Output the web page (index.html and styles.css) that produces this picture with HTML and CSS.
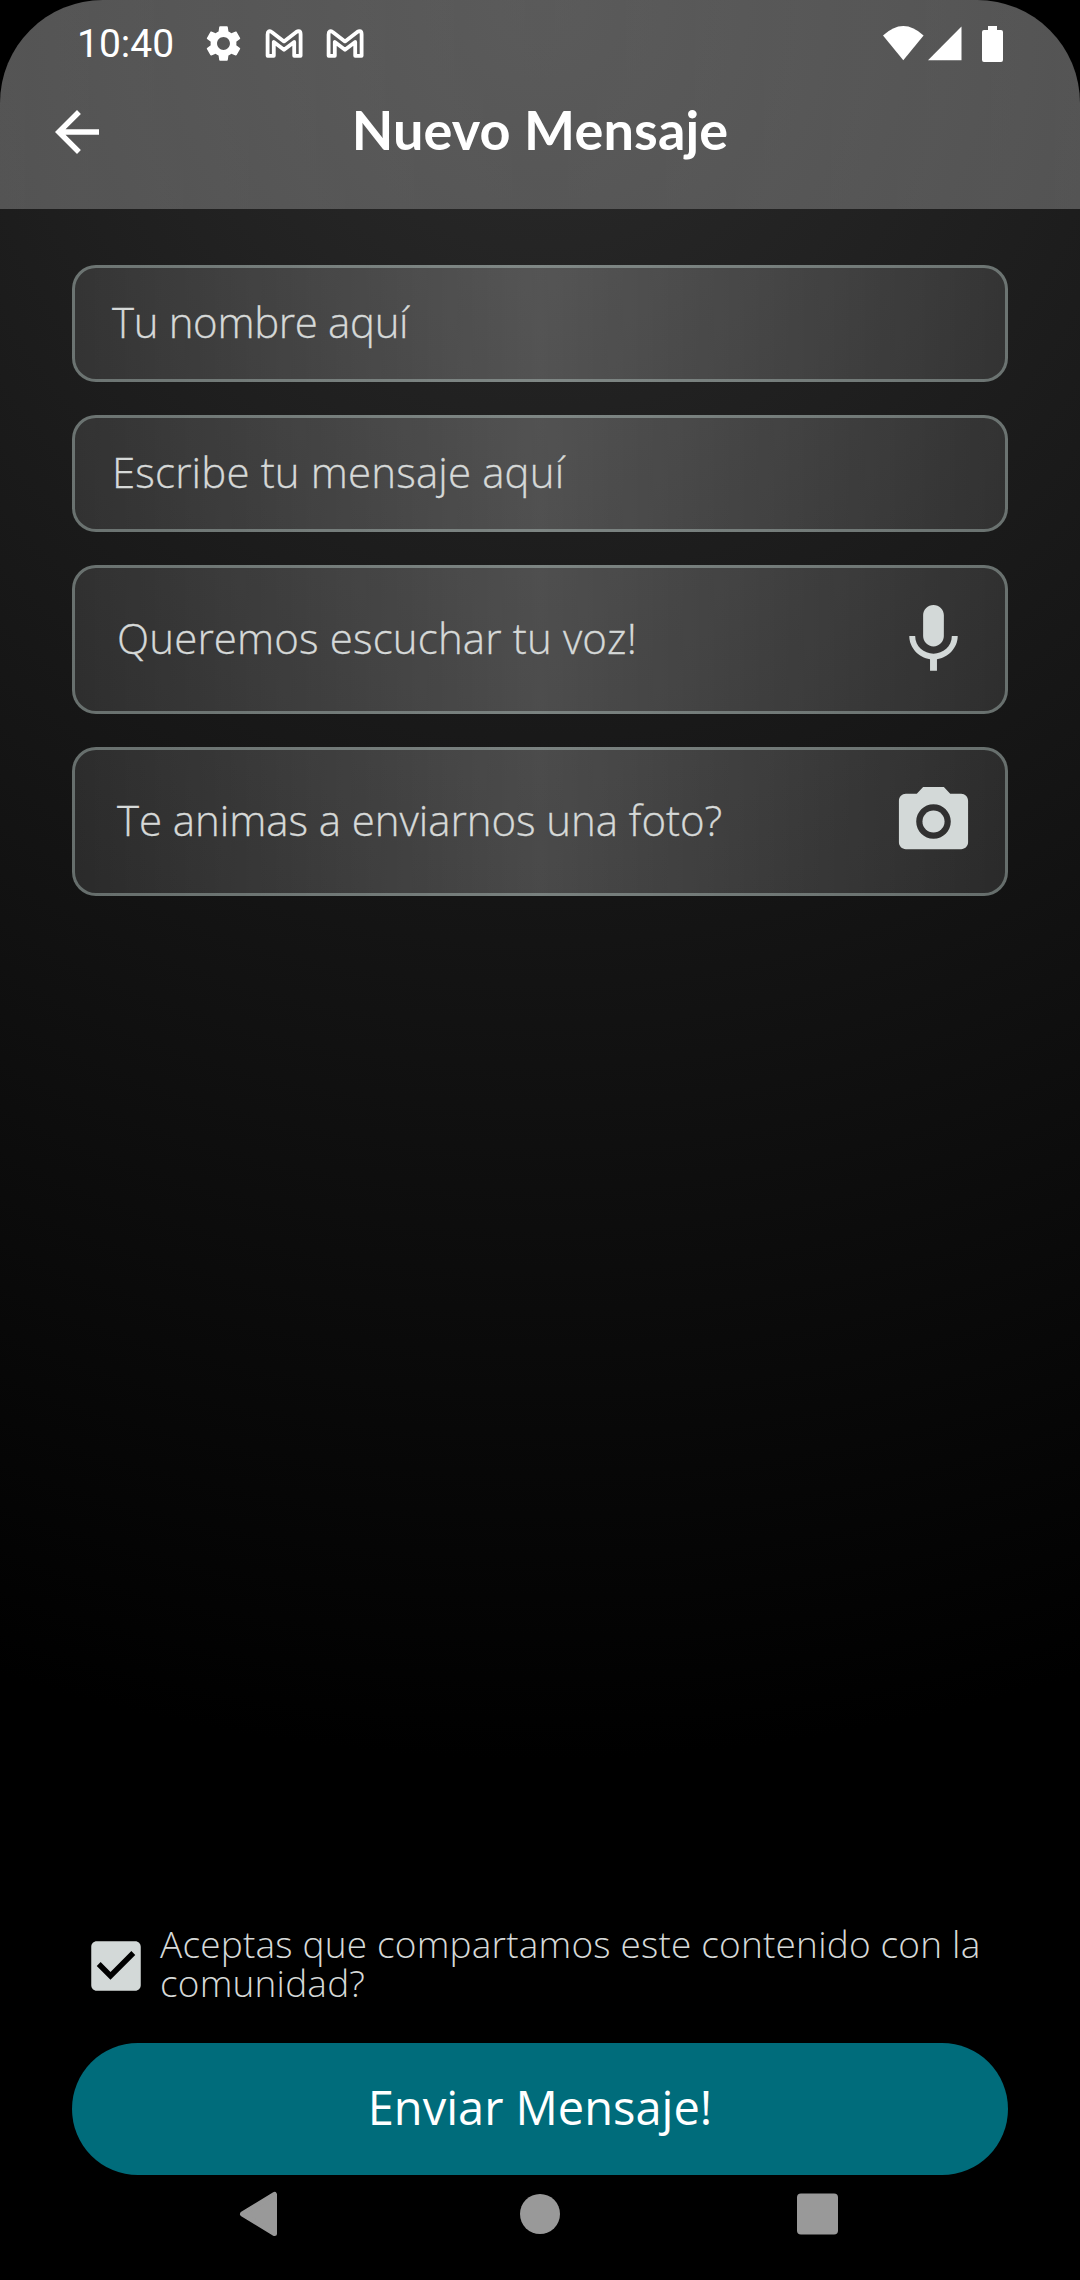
FILE: index.html
```html
<!DOCTYPE html>
<html lang="es">
<head>
<meta charset="utf-8">
<title>Nuevo Mensaje</title>
<link rel="stylesheet" href="styles.css">
</head>
<body>
<div class="screen">
  <header class="header">
    <div class="status">
      <span class="time">10:40</span>
      <svg class="gear" viewBox="0 0 24 24"><path d="M19.14 12.94c.04-.3.06-.61.06-.94 0-.32-.02-.64-.07-.94l2.03-1.58c.18-.14.23-.41.12-.61l-1.92-3.32c-.12-.22-.37-.29-.59-.22l-2.39.96c-.5-.38-1.03-.7-1.62-.94l-.36-2.54c-.04-.24-.24-.41-.48-.41h-3.84c-.24 0-.43.17-.47.41l-.36 2.54c-.59.24-1.13.57-1.62.94l-2.39-.96c-.22-.08-.47 0-.59.22L2.74 8.87c-.12.21-.08.47.12.61l2.03 1.58c-.05.3-.09.63-.09.94s.02.64.07.94l-2.03 1.58c-.18.14-.23.41-.12.61l1.92 3.32c.12.22.37.29.59.22l2.39-.96c.5.38 1.03.7 1.62.94l.36 2.54c.05.24.24.41.48.41h3.84c.24 0 .44-.17.47-.41l.36-2.54c.59-.24 1.13-.56 1.62-.94l2.39.96c.22.08.47 0 .59-.22l1.92-3.32c.12-.22.07-.47-.12-.61l-2.01-1.58zM12 15.6c-1.98 0-3.6-1.62-3.6-3.6s1.62-3.6 3.6-3.6 3.6 1.62 3.6 3.6-1.62 3.6-3.6 3.6z"/></svg>
      <svg class="mail" viewBox="0 0 40 32"><path d="M3.6 27.8V6.6Q3.6 1.2 8 4.2L20 13.4 32 4.2Q36.6 1.2 36.6 6.6V27.8H30.2V14L20 21.8 9.8 14V27.8Z"/></svg>
      <svg class="mail" viewBox="0 0 40 32"><path d="M3.6 27.8V6.6Q3.6 1.2 8 4.2L20 13.4 32 4.2Q36.6 1.2 36.6 6.6V27.8H30.2V14L20 21.8 9.8 14V27.8Z"/></svg>
      <svg class="system" viewBox="0 0 120 36"><path d="M0 9.5Q20.3-9.5 40.6 9.5L20.3 34.3Z"/><path d="M45 34.3H78.5V.5Z"/><path d="M105 0h9v4h4q2 0 2 2v28q0 2-2 2h-17q-2 0-2-2V6q0-2 2-2h4z"/></svg>
    </div>
    <div class="titlebar">
      <svg class="back" viewBox="0 0 24 24"><path d="M20 11H7.83l5.59-5.59L12 4l-8 8 8 8 1.41-1.41L7.83 13H20v-2z"/></svg>
      <h1 class="title">Nuevo Mensaje</h1>
    </div>
  </header>
  <main class="form">
    <div class="field"><span class="hint hint-name">Tu nombre aquí</span></div>
    <div class="field"><span class="hint hint-wide">Escribe tu mensaje aquí</span></div>
    <div class="field field-media"><span class="hint hint-wide">Queremos escuchar tu voz!</span>
      <svg class="media-icon" viewBox="0 0 24 24"><path d="M12 14c1.66 0 2.99-1.34 2.99-3L15 5c0-1.66-1.34-3-3-3S9 3.34 9 5v6c0 1.66 1.34 3 3 3zm5.3-3c0 3-2.54 5.1-5.3 5.1S6.7 14 6.7 11H5c0 3.41 2.72 6.23 6 6.72V21h2v-3.28c3.28-.48 6-3.3 6-6.72h-1.7z"/></svg>
    </div>
    <div class="field field-media"><span class="hint">Te animas a enviarnos una foto?</span>
      <svg class="media-icon" viewBox="0 0 24 24"><circle cx="12" cy="12" r="3.2"/><path d="M9 2L7.17 4H4c-1.1 0-2 .9-2 2v12c0 1.1.9 2 2 2h16c1.1 0 2-.9 2-2V6c0-1.1-.9-2-2-2h-3.17L15 2H9zm3 15c-2.76 0-5-2.24-5-5s2.24-5 5-5 5 2.24 5 5-2.24 5-5 5z"/></svg>
    </div>
  </main>
  <footer class="footer">
    <div class="consent">
      <svg class="checkbox" viewBox="0 0 24 24"><path d="M19 3H5c-1.11 0-2 .9-2 2v14c0 1.1.89 2 2 2h14c1.11 0 2-.9 2-2V5c0-1.1-.89-2-2-2zm-9 14l-5-5 1.41-1.41L10 14.17l7.59-7.59L19 8l-9 9z"/></svg>
      <p class="consent-text">Aceptas que compartamos este contenido con la comunidad?</p>
    </div>
    <div class="send">Enviar Mensaje!</div>
  </footer>
  <nav class="nav">
    <svg class="nav-icon" viewBox="0 0 48 48"><path class="nav-back" d="M5.5 24L37.5 4.500V43.500Z"/></svg>
    <svg class="nav-icon" viewBox="0 0 48 48"><circle cx="24" cy="24" r="20"/></svg>
    <svg class="nav-icon" viewBox="0 0 48 48"><rect x="2" y="3.5" width="41" height="41" rx="4"/></svg>
  </nav>
</div>
</body>
</html>
```
FILE: styles.css
```css
* { box-sizing: border-box; margin: 0; }
body { background: #000; }
svg { display: block; flex: none; }
.screen {
  width: 1080px;
  height: 2280px;
  display: flex;
  flex-direction: column;
  overflow: hidden;
  border-radius: 103px 103px 0 0;
  background: radial-gradient(circle at 540px 0, #2b2b2b 0, #000 1760px);
  font-family: "Open Sans", "Liberation Sans", sans-serif;
  color: #d6d9d8;
}
.header {
  height: 209px;
  flex: none;
  background: linear-gradient(90deg, rgba(255, 255, 255, .245), rgba(255, 255, 255, .225) 50%, rgba(255, 255, 255, .245));
  color: #fff;
}
.status { height: 87px; padding: 0 77px; display: flex; align-items: center; fill: #fff; }
.time { font: 400 39px/85px Roboto, sans-serif; width: 125px; padding-top: 2px; }
.gear { width: 43px; height: 43px; margin-right: -1px; }
.mail { width: 40px; height: 32px; margin-left: 20px; fill: none; stroke: #fff; stroke-width: 3.8; stroke-linejoin: round; }
.mail + .mail { margin-left: 21px; }
.system { width: 120px; height: 36px; margin-left: auto; }
.titlebar { height: 90px; padding: 0 44px; display: grid; grid-template-columns: 66px 1fr 66px; align-items: center; }
.back { width: 66px; height: 66px; fill: #fff; }
.title { font: 700 54px/66px Lato, sans-serif; letter-spacing: .15px; text-align: center; padding-bottom: 5px; }
.form { padding: 56px 72px 0; display: flex; flex-direction: column; gap: 33px; }
.field {
  height: 117px;
  padding: 0 30px 0 37px;
  display: flex;
  align-items: center;
  justify-content: space-between;
  border: 3px solid rgba(200, 220, 215, .38);
  border-radius: 24px;
  background: linear-gradient(90deg, rgba(255, 255, 255, .1), rgba(255, 255, 255, .225) 50%, rgba(255, 255, 255, .1)) border-box;
}
.field-media { height: 149px; padding-left: 42px; }
.hint {
  font-size: 42px;
  font-weight: 300;
  line-height: 60px;
  padding-bottom: 4px;
  white-space: nowrap;
  letter-spacing: -.06px;
  -webkit-text-stroke: .3px currentColor;
}
.hint-name { letter-spacing: -.35px; }
.hint-wide { letter-spacing: .14px; }
.media-icon { width: 83px; height: 83px; fill: #d3d9d8; }
.footer { margin-top: auto; padding: 0 72px; }
.consent { height: 119px; padding-left: 11px; display: flex; align-items: flex-start; }
.checkbox { width: 66px; height: 66px; margin: 9px 11px 0 0; fill: #d3d9d8; }
.consent-text { font-size: 37px; font-weight: 300; line-height: 39px; letter-spacing: .19px; }
.send {
  height: 132px;
  border-radius: 66px;
  background: #006c7b;
  color: #fff;
  font-size: 47px;
  line-height: 128px;
  text-align: center;
}
.nav { height: 105px; padding: 15px 237px 0; display: flex; justify-content: space-between; fill: #999; }
.nav-icon { width: 48px; height: 48px; }
.nav-back { stroke: #999; stroke-width: 5; stroke-linejoin: round; }
```
